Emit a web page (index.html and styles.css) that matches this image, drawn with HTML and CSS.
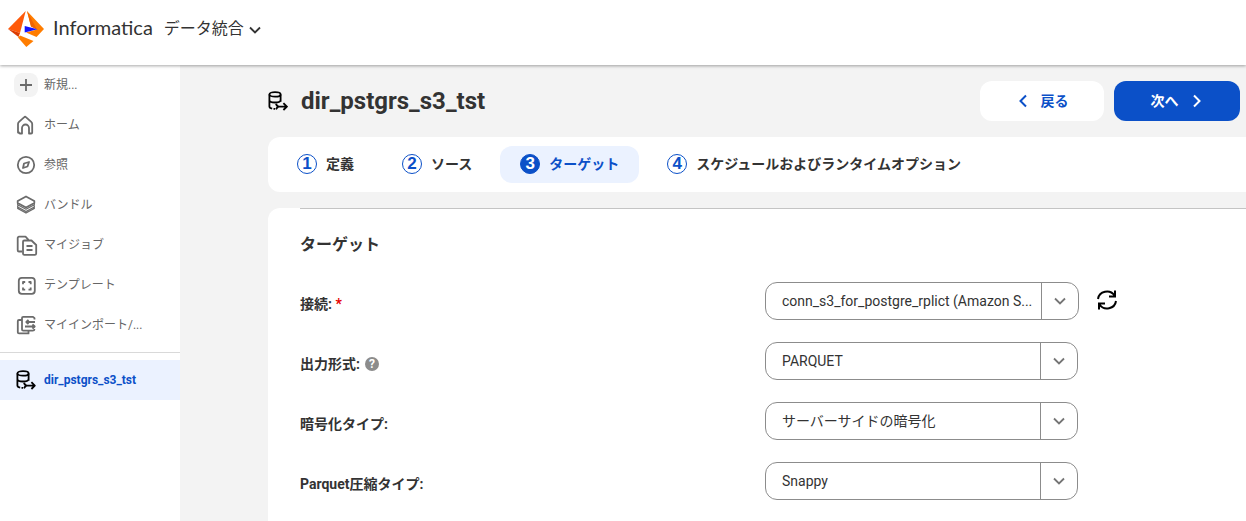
FILE: index.html
```html
<!DOCTYPE html>
<html lang="ja">
<head>
  <meta charset="UTF-8" />
  <meta name="viewport" content="width=device-width, initial-scale=1" />
  <title>Informatica データ統合</title>
  <link rel="stylesheet" href="styles.css">
</head>
<body>

<!-- shared icon shapes -->
<svg class="sprite" aria-hidden="true">
  <symbol id="icon-db" viewBox="0 0 20 20">
    <g fill="none" stroke="currentColor" stroke-width="1.8">
      <ellipse cx="7" cy="3.4" rx="5.6" ry="2.3"/>
      <path d="M1.4 3.4v12.2c0 1 1.2 1.8 2.8 2.1M12.6 3.4v7.4M1.4 9c0 1.4 2.6 2.5 5.6 2.5s5.6-1.1 5.6-2.5M5.500 17.800h1.500"/>
      <path d="M8 12.800c.5 1.800 1.300 2.800 3 2.800h7.500M8 18.400c.6-1.200 1.200-2 2.200-2.500M15.400 12.200l3.400 3.400-3.400 3.400"/>
    </g>
  </symbol>
  <symbol id="icon-down" viewBox="0 0 14 14">
    <path d="M2 4.5l5 5 5-5" fill="none" stroke="currentColor" stroke-width="1.8"/>
  </symbol>
</svg>

<header class="topbar">
  <svg class="logo" viewBox="0 0 36 36" aria-hidden="true">
    <path d="M17.700 0L0 18l12 4z" fill="#ff5a0a"/>
    <path d="M0 18l10.500 8 1.500-4z" fill="#dc3c00"/>
    <path d="M19 0l17 18-7.500 8-10.500-4.500 11-3-6-3z" fill="#ff7d00"/>
    <path d="M19 0l10 18.500-6-3z" fill="#f06400"/>
    <path d="M10 26.500l2-2 13.500 5.500-7.200 6z" fill="#ff7d00"/>
    <path d="M16.700 15l12.800 3.300-12.800 3.300z" fill="#1414ff"/>
  </svg>
  <span class="brand">Informatica</span>
  <button type="button" class="service">データ統合
    <svg class="service-arrow"><use href="#icon-down"/></svg>
  </button>
</header>

<div class="layout">
  <nav class="sidebar">
    <a class="nav-item" href="#">
      <span class="nav-icon new"><svg viewBox="0 0 24 24"><path d="M12 6v12M6 12h12"/></svg></span>新規...
    </a>
    <a class="nav-item" href="#">
      <span class="nav-icon"><svg viewBox="0 0 24 24"><path d="M4 19.500v-8.500a3 3 0 0 1 1-2.200l5-4.500a1.600 1.600 0 0 1 2.200 0l5 4.500a3 3 0 0 1 1 2.200v8.500a1 1 0 0 1-1 1h-2.200v-5.500a3.500 3.500 0 0 0-7 0v5.500h-2a1 1 0 0 1-1-1z"/></svg></span>ホーム
    </a>
    <a class="nav-item" href="#">
      <span class="nav-icon"><svg viewBox="0 0 24 24"><circle cx="12" cy="12" r="8.200"/><path d="M15 9l-1.500 4.500L9 15l1-4.500z"/></svg></span>参照
    </a>
    <a class="nav-item" href="#">
      <span class="nav-icon"><svg viewBox="0 0 24 24"><path d="M12 3.500l8.300 4.500v2L12 14.500 3.700 10V8z" /><path d="M3.700 10v1.700l8.300 4.500 8.300-4.500V10M3.700 12.500v1.500l8.300 4.500 8.300-4.500v-1.500M3.700 14.500v1l8.300 4.500 8.300-4.500v-1" stroke-width="1.300"/></svg></span>バンドル
    </a>
    <a class="nav-item" href="#">
      <span class="nav-icon"><svg viewBox="0 0 24 24"><path d="M8 18.500H5a1.300 1.300 0 0 1-1.300-1.300V5A1.300 1.300 0 0 1 5 3.700h6.500l3 3.200M10.300 7.500h7.200l4.700 4.500v8.500a1.300 1.300 0 0 1-1.300 1.300H10.300A1.300 1.300 0 0 1 9 20.500V8.800a1.300 1.300 0 0 1 1.300-1.300zM12.500 13h6M12.500 17h6"/></svg></span>マイジョブ
    </a>
    <a class="nav-item" href="#">
      <span class="nav-icon"><svg viewBox="0 0 24 24"><rect x="4.800" y="4.800" width="16" height="16" rx="3"/><path d="M9 11.200V9h2.200M14.500 9h2.200v2.200M16.700 14.500v2.200h-2.200M11.200 16.700H9v-2.200"/></svg></span>テンプレート
    </a>
    <a class="nav-item" href="#">
      <span class="nav-icon"><svg viewBox="0 0 24 24"><path d="M7.500 7H5a1.200 1.200 0 0 0-1.200 1.200v11a1.200 1.200 0 0 0 1.200 1.200h9.500v-2.500M20.500 6.500V5.200L19 3.800H9.200A1.200 1.200 0 0 0 8 5v11.500a1.200 1.200 0 0 0 1.200 1.200h9.500a1.800 1.800 0 0 0 1.800-1.700M21 9h-8.500M14.500 6.800L12.300 9l2.200 2.200M11 13.500h9.500M18.500 11.300l2.200 2.200-2.200 2.200"/></svg></span>マイインポート/...
    </a>
    <div class="nav-open">
      <a class="nav-item active" href="#">
        <span class="nav-icon"><svg class="db-icon"><use href="#icon-db"/></svg></span>dir_pstgrs_s3_tst
      </a>
    </div>
  </nav>

  <main class="main">
    <div class="page-header">
      <svg class="db-icon"><use href="#icon-db"/></svg>
      <h1>dir_pstgrs_s3_tst</h1>
      <div class="actions">
        <button type="button" class="btn">
          <svg viewBox="0 0 14 14"><path d="M10 1.500L4.500 7l5.500 5.500"/></svg>戻る
        </button>
        <button type="button" class="btn btn-primary">
          次へ<svg viewBox="0 0 14 14"><path d="M4 1.500L9.500 7 4 12.500"/></svg>
        </button>
      </div>
    </div>

    <div class="steps">
      <button type="button" class="step"><span class="num">1</span>定義</button>
      <button type="button" class="step"><span class="num">2</span>ソース</button>
      <button type="button" class="step current"><span class="num">3</span>ターゲット</button>
      <button type="button" class="step"><span class="num">4</span>スケジュールおよびランタイムオプション</button>
    </div>

    <section class="panel">
      <div class="panel-body">
        <h2>ターゲット</h2>
        <form class="fields">
          <div class="field">
            <label for="connection">接続: <span class="required">*</span></label>
            <div class="control">
              <div class="select wide">
                <select id="connection"><option>conn_s3_for_postgre_rplict (Amazon S...</option></select>
                <span class="arrow"><svg><use href="#icon-down"/></svg></span>
              </div>
              <button type="button" class="refresh" aria-label="更新">
                <svg viewBox="0 0 22 22">
                  <path d="M2 9a9 8.500 0 0 1 16.500-3.500M20 11a9 8.500 0 0 1-16.500 3.500M19 .5v6h-6M3 19.500v-6h6"/>
                </svg>
              </button>
            </div>
          </div>
          <div class="field">
            <div class="label-cell">
              <label for="format">出力形式:</label>
              <span class="help">?</span>
            </div>
            <div class="control">
              <div class="select">
                <select id="format"><option>PARQUET</option></select>
                <span class="arrow"><svg><use href="#icon-down"/></svg></span>
              </div>
            </div>
          </div>
          <div class="field">
            <label for="encryption">暗号化タイプ:</label>
            <div class="control">
              <div class="select">
                <select id="encryption"><option>サーバーサイドの暗号化</option></select>
                <span class="arrow"><svg><use href="#icon-down"/></svg></span>
              </div>
            </div>
          </div>
          <div class="field">
            <label for="compression">Parquet圧縮タイプ:</label>
            <div class="control">
              <div class="select">
                <select id="compression"><option>Snappy</option></select>
                <span class="arrow"><svg><use href="#icon-down"/></svg></span>
              </div>
            </div>
          </div>
        </form>
      </div>
    </section>
  </main>
</div>

</body>
</html>
```
FILE: styles.css
```css
* {
  margin: 0; padding: 0; box-sizing: border-box;
}
body {
  min-height: 100vh;
  display: flex;
  flex-direction: column;
  font-family: Roboto, 'Noto Sans CJK JP', sans-serif;
  font-size: 14px;
  line-height: 20px;
  color: #333;
  background: #f3f3f3;
}
button, select {
  font: inherit;
  color: inherit;
  border: none;
  background: none;
  cursor: pointer;
}
.sprite {
  display: none;
}

/* top bar */
.topbar {
  position: relative;
  z-index: 1;
  height: 65px;
  padding: 0 8px 8px;
  display: flex;
  align-items: center;
  background: #fff;
  box-shadow: 0 1px 3px rgba(0,0,0,0.35);
}
.logo {
  width: 36px;
  height: 36px;
}
.brand {
  margin: 0 11px 0 9px;
  padding-bottom: 4px;
  font-family: Lato, sans-serif;
  font-size: 20px;
}
.service {
  display: flex;
  align-items: center;
  gap: 4px;
  font-size: 16px;
}
.service-arrow {
  width: 14px;
  height: 14px;
  margin-top: 2px;
}

.layout {
  flex: 1;
  display: flex;
}

/* sidebar */
.sidebar {
  width: 180px;
  flex-shrink: 0;
  background: #fff;
}
.nav-item {
  height: 40px;
  padding-left: 14px;
  display: flex;
  align-items: center;
  gap: 6px;
  font-size: 12px;
  color: #666;
  text-decoration: none;
  white-space: nowrap;
}
.nav-icon {
  width: 24px;
  height: 24px;
  display: flex;
  align-items: center;
  justify-content: center;
}
.nav-icon svg {
  width: 24px;
  height: 24px;
  fill: none;
  stroke: #6b6b6b;
  stroke-width: 1.8;
  stroke-linejoin: round;
}
.nav-icon.new {
  background: #f3f3f3;
  border-radius: 8px;
}
.nav-open {
  margin-top: 7px;
  padding-top: 7px;
  border-top: 1px solid #d9d9d9;
}
.nav-item.active {
  background: #ebf2ff;
  color: #0b50c8;
  font-weight: bold;
}
.db-icon, .nav-icon .db-icon {
  width: 20px;
  height: 20px;
  color: #000;
  stroke: none;
}

/* page header */
.main {
  flex: 1;
  min-width: 0;
  padding-left: 88px;
  display: flex;
  flex-direction: column;
}
.page-header {
  padding: 16px 6px 16px 0;
  display: flex;
  align-items: center;
}
h1 {
  margin-left: 13px;
  font-size: 24px;
  line-height: 32px;
}
.actions {
  margin-left: auto;
  display: flex;
  gap: 10px;
}
.btn {
  min-width: 124px;
  height: 40px;
  display: flex;
  align-items: center;
  justify-content: center;
  gap: 11px;
  border-radius: 12px;
  background: #fff;
  color: #0b50c8;
  font-weight: bold;
}
.btn svg {
  width: 14px;
  height: 14px;
  fill: none;
  stroke: currentColor;
  stroke-width: 2;
}
.btn-primary {
  min-width: 126px;
  background: #0b50c8;
  color: #fff;
}

/* wizard steps */
.steps {
  padding: 9px;
  display: flex;
  gap: 8px;
  background: #fff;
  border-radius: 12px 0 0 12px;
}
.step {
  height: 37px;
  padding: 0 20px 2px;
  display: flex;
  align-items: center;
  gap: 9px;
  border-radius: 12px;
  font-weight: bold;
  white-space: nowrap;
}
.num {
  width: 20px;
  height: 20px;
  border: 1px solid #0b50c8;
  border-radius: 50%;
  font-family: 'Liberation Sans', sans-serif;
  font-size: 17px;
  line-height: 18px;
  text-align: center;
  color: #0b50c8;
}
.step.current {
  background: #ebf2ff;
  color: #0b50c8;
}
.step.current .num {
  background: #0b50c8;
  color: #fff;
}

/* form panel */
.panel {
  flex: 1;
  margin-top: 16px;
  padding-left: 32px;
  background: #fff;
  border-radius: 12px 0 0 0;
}
.panel-body {
  padding: 24px 16px 20px 0;
  border-top: 1px solid #c4c4c4;
}
h2 {
  font-size: 16px;
  line-height: 24px;
}
.fields {
  margin-top: 25px;
  display: grid;
  gap: 22px;
}
.field {
  display: grid;
  grid-template-columns: 1fr 1fr;
  align-items: center;
}
.field label {
  padding-top: 6px;
  font-weight: bold;
}
.label-cell {
  display: flex;
  align-items: center;
  gap: 5px;
}
.required {
  color: #e60000;
}
.help {
  width: 14px;
  height: 14px;
  margin-top: 6px;
  border-radius: 50%;
  background: #8c8c8c;
  color: #fff;
  font-size: 12px;
  font-weight: bold;
  line-height: 14px;
  text-align: center;
}
.control {
  display: flex;
  align-items: center;
  gap: 17px;
}
.select {
  position: relative;
  width: 313px;
}
.select.wide {
  width: 314px;
}
.select select {
  width: 100%;
  height: 38px;
  padding: 0 40px 0 16px;
  border: 1px solid #8c8c8c;
  border-radius: 12px;
  appearance: none;
}
.arrow {
  position: absolute;
  top: 1px;
  right: 1px;
  bottom: 1px;
  width: 37px;
  display: flex;
  align-items: center;
  justify-content: center;
  border-left: 1px solid #8c8c8c;
  color: #757575;
  pointer-events: none;
}
.arrow svg {
  width: 14px;
  height: 14px;
}
.refresh {
  width: 22px;
  height: 22px;
}
.refresh svg {
  display: block;
  fill: none;
  stroke: #000;
  stroke-width: 2;
}
```
